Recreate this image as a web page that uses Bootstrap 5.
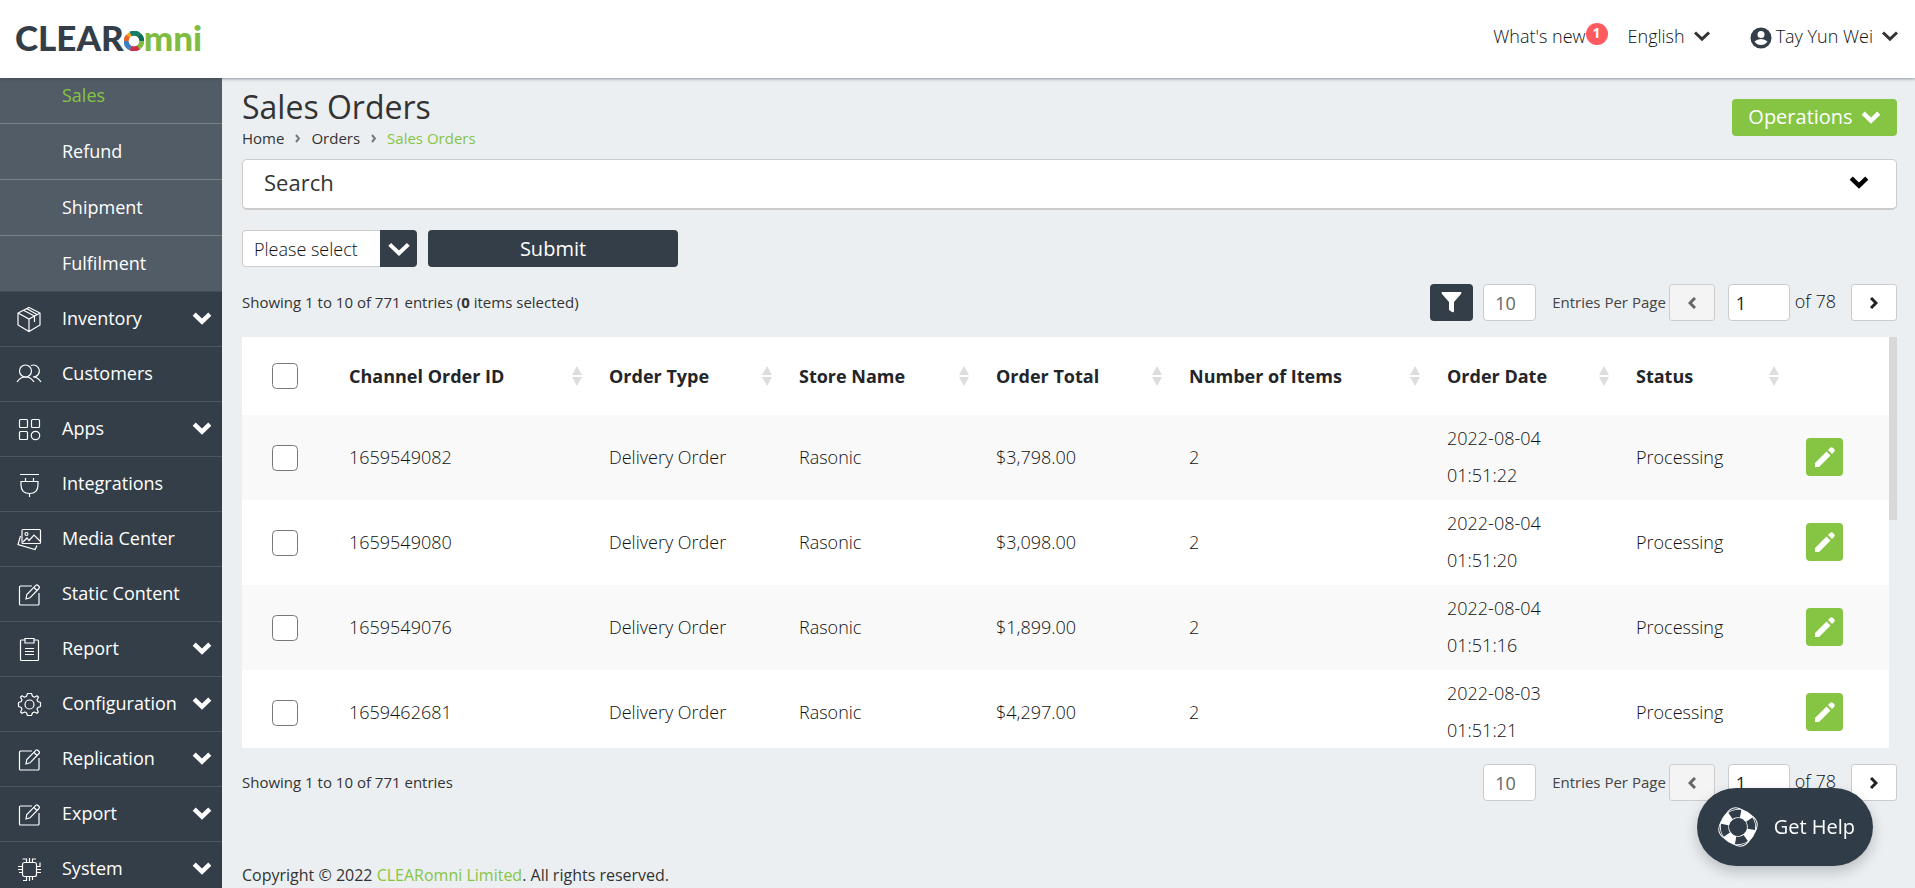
<!DOCTYPE html>
<html lang="en">
<head>
<meta charset="utf-8">
<meta name="viewport" content="width=device-width, initial-scale=1">
<title>Sales Orders - CLEARomni</title>
<link href="https://cdn.jsdelivr.net/npm/bootstrap@5.3.0/dist/css/bootstrap.min.css" rel="stylesheet">
<style>
:root{--dark:#343e48;--green:#86c543;--line:#ccc}
body{font-family:"Open Sans",sans-serif;font-size:18px;font-weight:400;line-height:24px;color:#333;background:#ebeff2}
a{color:inherit;text-decoration:none}
.form-control,.form-select,.btn{font-size:18px;line-height:24px;border-radius:4px}
.topbar{height:78px;background:#fff;z-index:3;box-shadow:0 1px 3px rgba(52,62,72,.5);padding:0 16px 0 15px;flex:none}
.brand{font-family:Lato,sans-serif;font-weight:900;font-size:35px;line-height:40px;color:var(--dark);margin-bottom:5px}
.brand .omni{color:#7fbd42}
.topmenu{font-size:18px;font-weight:300;padding-bottom:6px;color:#111}
.topmenu button{background:none;border:0;padding:0;color:#111;font-weight:300}
.topmenu .chev{color:#333}
.lang{margin-right:39px}
.count{width:22px;height:22px;background:#ff5a5f;font-size:14px;font-weight:700;line-height:20px;color:#fff;margin:0 20px 4px 0}
.body-row{min-height:0}
.side{width:222px;flex:none;background:var(--dark);overflow:hidden;color:#fff}
.side ul{margin:-10px 0 0;padding:0}
.side a{display:flex;align-items:center;height:55px;padding:0 10px 2px 15px;border-bottom:1px solid #4c5560}
.side .sub a{height:56px;padding:0 0 2px 62px;background:#525c66;border-bottom-color:#7b8086}
.side .sub:nth-child(4) a{border-bottom-color:#444e58}
.side .current{color:var(--green)}
.side .pic{width:28px;height:28px;margin:1px 19px 0 0;fill:none;stroke:#fff;stroke-width:1.2;flex:none}
.chev{fill:none;stroke:currentColor;flex:none}
.page{padding:8px 18px 0 20px;overflow:hidden}
h1{font-size:32px;line-height:42px;font-weight:400;margin:0}
.crumbs{font-size:15px;line-height:20px;gap:11px}
.green{color:var(--green)}
.btn-go{background:var(--green);color:#fff;font-size:20px;height:37px;width:165px}
.search{height:51px;background:#fff;border:1px solid var(--line);border-bottom-width:2px;border-radius:5px;font-size:22px;padding:0 27px 4px 21px;margin:11px 0 20px;color:#333}
.pick select{width:138px;height:37px;border:1px solid var(--line);border-right:0;border-radius:4px 0 0 4px;padding:0 0 0 11px;background:#fff;color:#111;font-weight:300}
.pick label{width:37px;height:37px;background:var(--dark);color:#fff;border-radius:0 4px 4px 0}
.btn-submit{background:var(--dark);color:#fff;width:250px;height:37px;font-size:20px;padding:0;margin-left:11px}
.bar{margin:17px 0 16px;font-size:15px}
.bar>span{padding-bottom:2px}
.pager label{margin:0 3px 2px 16px;color:#444}
.filter{width:43px;height:37px;padding:0;background:var(--dark);margin-right:10px}
.filter:hover{background:var(--dark)}
.box{height:37px;border:1px solid var(--line);background:#fff}
.per{width:53px;padding:0 11px;color:#666}
.num{width:62px;padding:0 7px;margin-left:13px;color:#222}
.of{font-size:18px;font-weight:300;color:#111;margin:0 15px 4px 5px}
.nav-btn{display:flex;align-items:center;justify-content:center;width:46px;height:37px;border:1px solid var(--line);border-radius:3px;padding:0;background:#fff;color:#222}
.nav-btn:disabled{background:#f4f4f4;color:#666;border-color:var(--line);opacity:1}
.scroller{height:calc(100vh - 477px);min-height:78px}
.orders{table-layout:fixed;width:100%;background:#fff;color:#111}
.orders th{height:78px;font-weight:700;color:#222529;padding:0 7px 1px 20px}
.orders td{height:85px;padding:0 20px 1px;line-height:37px;font-weight:300}
.orders tbody tr:nth-child(odd){background:#f9f9f9}
.orders .tick{padding:0 0 0 30px}
.orders input{display:block;width:26px;height:26px;margin:0;border:1px solid #777;border-radius:3px}
.edit{width:37px;height:38px;padding:0;background:var(--green)}
.thumb{width:8px;flex:none}
.thumb div{height:183px;background:#d8d8d8}
.foot{font-size:16px;padding-top:46px}
.help{position:fixed;right:42px;bottom:22px;width:176px;height:78px;border:0;border-radius:39px;background:#303d49;color:#fff;font-size:20px;font-weight:500;padding:0 18px 0 20px;box-shadow:0 6px 14px rgba(0,0,0,.2)}
</style>
</head>
<body>
<svg class="d-none">
  <symbol id="down" viewBox="0 0 18 12"><path d="M2 2.500 9 9.200 16 2.500"/></symbol>
  <symbol id="sort" viewBox="0 0 10 20"><path d="M5 0 10 9H0ZM0 11H10L5 20Z" fill="#ddd"/></symbol>
  <symbol id="pencil" viewBox="0 0 20 20"><path fill="#fff" d="M0 16 11.500 4.500 15.500 8.500 4 20H0ZM13 3 15 1Q16.500-.5 18 1L19 2Q20.500 3.500 19 5L17 7Z"/></symbol>
  <symbol id="compose" viewBox="0 0 28 28"><path d="M17 6H5.500Q4.500 6 4.500 7V24Q4.500 25 5.500 25H23Q24 25 24 24V13M11 19 11.800 14.500 21 5.200Q22 4.600 23 5.500L24 6.500Q24.900 7.400 24 8.500L15 17.800ZM19 7.500 22 10.500"/></symbol>
</svg>
<div class="vh-100 d-flex flex-column overflow-hidden">
<header class="topbar d-flex align-items-center justify-content-between">
  <a class="brand d-flex align-items-center" href="#"><span>CLEAR</span><svg class="mt-2" width="20" height="20" viewBox="1 1 18 18" fill="none" stroke-width="4.500"><circle cx="10" cy="10" r="6.700" stroke="#f5a623"/><path d="M7 3.700A7 7 0 0 1 15 5.200" stroke="#12806a"/><path d="M15 5A7 7 0 0 1 17 10" stroke="#0b6b58"/><path d="M17 10A7 7 0 0 1 14 15.700" stroke="#7fbd42"/><path d="M14 15.700A7 7 0 0 1 7 16.300" stroke="#c8324a"/><path d="M7 16.300A7 7 0 0 1 3 9.500" stroke="#3d7fc4"/><path d="M3 10A7 7 0 0 1 4.500 5.700" stroke="#e8632c"/><circle cx="10" cy="10" r="4.800" fill="#fff"/></svg><span class="omni">mni</span></a>
  <nav class="topmenu d-flex align-items-center">
    <a href="#">What's new</a><span class="count rounded-circle text-center">1</span>
    <button type="button" class="lang d-flex align-items-center">English<svg class="chev ms-2" width="18" height="12" stroke-width="3"><use href="#down"/></svg></button>
    <button type="button" class="d-flex align-items-center"><svg class="me-1 mt-1" width="22" height="22" viewBox="0 0 22 22"><circle cx="11" cy="11" r="10.500" fill="#343e48"/><circle cx="11" cy="7.500" r="3.500" fill="#fff"/><path d="M4.500 14.500Q7 12 11 12T17.500 14.500Q15 18 11 18T4.500 14.500Z" fill="#fff"/></svg>Tay Yun Wei<svg class="chev ms-2" width="18" height="12" stroke-width="3"><use href="#down"/></svg></button>
  </nav>
</header>
<div class="body-row d-flex flex-fill">
<nav class="side">
  <ul class="list-unstyled">
    <li class="sub"><a class="current" href="#">Sales</a></li>
    <li class="sub"><a href="#">Refund</a></li>
    <li class="sub"><a href="#">Shipment</a></li>
    <li class="sub"><a href="#">Fulfilment</a></li>
    <li><a href="#"><svg class="pic" viewBox="0 0 28 28"><path d="M14 2.500 25 8V20L14 26.500 3 20V8ZM3 8 14 14 25 8M14 14V26M8.500 5.200 19.500 11V17M12 3.700 22 9.500"/></svg><span>Inventory</span><svg class="chev ms-auto" width="20" height="14" stroke-width="4"><use href="#down"/></svg></a></li>
    <li><a href="#"><svg class="pic" viewBox="0 0 28 28"><circle cx="10.500" cy="11" r="6"/><path d="M2 22Q5 17 10.500 17T19 22M16 5.500A6 6 0 1 1 18 17Q23 17 26 22"/></svg><span>Customers</span></a></li>
    <li><a href="#"><svg class="pic" viewBox="0 0 28 28"><rect x="4.500" y="4.500" width="8" height="8" rx="1"/><rect x="16.500" y="4.500" width="8" height="8" rx="1"/><rect x="4.500" y="16.500" width="8" height="8" rx="1"/><circle cx="20.500" cy="20.500" r="4.200"/></svg><span>Apps</span><svg class="chev ms-auto" width="20" height="14" stroke-width="4"><use href="#down"/></svg></a></li>
    <li><a href="#"><svg class="pic" viewBox="0 0 28 28"><path d="M5 4.500H24M10.500 8V11M18.500 8V11M6 11.500H23V15Q23 23.500 14.500 23.500T6 15ZM14.500 23.500V27"/></svg><span>Integrations</span></a></li>
    <li><a href="#"><svg class="pic" viewBox="0 0 28 28"><rect x="7" y="4.500" width="18.500" height="14" rx="1"/><circle cx="11.500" cy="9" r="1.500"/><path d="M8 17 12 13 14 15.500 19 10 25 16M5.500 11 3 19.500 20 24.500 22 20.500"/></svg><span>Media Center</span></a></li>
    <li><a href="#"><svg class="pic"><use href="#compose"/></svg><span>Static Content</span></a></li>
    <li><a href="#"><svg class="pic" viewBox="0 0 28 28"><path d="M10 5H6Q5.500 5 5.500 6V24.500Q5.500 25.500 6.500 25.500H22.500Q23.500 25.500 23.500 24.500V6Q23.500 5 22.500 5H19M10 3.500H19V8H10ZM10 13.500H19M10 16.500H19M10 19.500H19"/></svg><span>Report</span><svg class="chev ms-auto" width="20" height="14" stroke-width="4"><use href="#down"/></svg></a></li>
    <li><a href="#"><svg class="pic" viewBox="0 0 28 28"><circle cx="14.500" cy="14.500" r="4.500"/><path d="M12.500 3.500H16.500L17.500 6.300 19.500 7.200 22 5.800 23.500 7.200 22 9.800 22.800 11.500 25.500 12.500V16.500L22.800 17.500 22 19.300 23.300 22 22 23.300 19.300 22 17.500 22.800 16.500 25.500H12.500L11.500 22.800 9.700 22 7 23.300 5.500 22 7 19.300 6.200 17.500 3.500 16.500V12.500L6.200 11.500 7 9.800 5.500 7.200 7 5.800 9.700 7.200 11.500 6.300Z" stroke-linejoin="round"/></svg><span>Configuration</span><svg class="chev ms-auto" width="20" height="14" stroke-width="4"><use href="#down"/></svg></a></li>
    <li><a href="#"><svg class="pic"><use href="#compose"/></svg><span>Replication</span><svg class="chev ms-auto" width="20" height="14" stroke-width="4"><use href="#down"/></svg></a></li>
    <li><a href="#"><svg class="pic"><use href="#compose"/></svg><span>Export</span><svg class="chev ms-auto" width="20" height="14" stroke-width="4"><use href="#down"/></svg></a></li>
    <li><a href="#"><svg class="pic" viewBox="0 0 28 28"><rect x="7.500" y="7.500" width="14" height="14" rx="2"/><path d="M11.500 7V4H7.500M14.500 7V3M17.500 7V4H21M11.500 22V25.500H8M14.500 22V26M17.500 22V25M7 11.500H3M7 14.500H3M7 17.500H4M22 11.500H25V7.500M22 14.500H26M22 17.500H26"/></svg><span>System</span><svg class="chev ms-auto" width="20" height="14" stroke-width="4"><use href="#down"/></svg></a></li>
  </ul>
</nav>
<main class="page flex-fill">
  <div class="d-flex justify-content-between align-items-center">
    <div>
      <h1>Sales Orders</h1>
      <div class="crumbs d-flex align-items-center">
        <a href="#">Home</a><svg width="5" height="9" viewBox="0 0 5 9" fill="none" stroke="#777" stroke-width="2"><path d="M1 1 4 4.500 1 8"/></svg>
        <a href="#">Orders</a><svg width="5" height="9" viewBox="0 0 5 9" fill="none" stroke="#777" stroke-width="2"><path d="M1 1 4 4.500 1 8"/></svg>
        <a href="#" class="green">Sales Orders</a>
      </div>
    </div>
    <button type="button" class="btn btn-go d-flex align-items-center justify-content-center p-0">Operations<svg class="chev ms-2" width="20" height="14" stroke-width="4"><use href="#down"/></svg></button>
  </div>
  <button type="button" class="search w-100 d-flex align-items-center justify-content-between">Search<svg class="chev text-black" width="20" height="14" stroke-width="4"><use href="#down"/></svg></button>
  <form class="d-flex pick">
    <select id="action" class="form-select" aria-label="Action"><option>Please select</option></select>
    <label for="action" class="d-flex align-items-center justify-content-center"><svg class="chev" width="24" height="16" stroke-width="3"><use href="#down"/></svg></label>
    <button type="button" class="btn btn-submit">Submit</button>
  </form>
  <div class="bar d-flex align-items-center justify-content-between">
    <span>Showing 1 to 10 of 771 entries (<strong>0</strong> items selected)</span>
    <div class="d-flex align-items-center pager">
      <button type="button" class="btn filter d-flex align-items-center justify-content-center" aria-label="Filter"><svg width="21" height="21" viewBox="0 0 21 21"><path d="M1 0H20Q21 1 20 2L13 10V19Q13 21 11 20L8 18V10L1 2Q0 1 1 0Z" fill="#fff"/></svg></button>
      <input class="form-control box per" id="per1" value="10"><label for="per1">Entries Per Page</label>
      <button class="btn nav-btn" type="button" disabled aria-label="Previous"><svg width="8" height="12" viewBox="0 0 8 12" fill="none" stroke="currentColor" stroke-width="3"><path d="M7 1 2 6 7 11"/></svg></button>
      <input class="form-control box num" value="1" aria-label="Page"><span class="of">of 78</span>
      <button class="btn nav-btn" type="button" aria-label="Next"><svg width="8" height="12" viewBox="0 0 8 12" fill="none" stroke="currentColor" stroke-width="3"><path d="M1 1 6 6 1 11"/></svg></button>
    </div>
  </div>
  <div class="scroller d-flex">
    <div class="flex-fill overflow-hidden">
    <table class="orders">
      <colgroup><col style="width:87px"><col style="width:260px"><col style="width:190px"><col style="width:197px"><col style="width:193px"><col style="width:258px"><col style="width:189px"><col style="width:170px"><col style="width:103px"></colgroup>
      <thead><tr>
        <th class="tick"><input class="form-check-input" type="checkbox" aria-label="Select all"></th>
        <th><div class="d-flex align-items-center justify-content-between">Channel Order ID<svg width="10" height="20"><use href="#sort"/></svg></div></th>
        <th><div class="d-flex align-items-center justify-content-between">Order Type<svg width="10" height="20"><use href="#sort"/></svg></div></th>
        <th><div class="d-flex align-items-center justify-content-between">Store Name<svg width="10" height="20"><use href="#sort"/></svg></div></th>
        <th><div class="d-flex align-items-center justify-content-between">Order Total<svg width="10" height="20"><use href="#sort"/></svg></div></th>
        <th><div class="d-flex align-items-center justify-content-between">Number of Items<svg width="10" height="20"><use href="#sort"/></svg></div></th>
        <th><div class="d-flex align-items-center justify-content-between">Order Date<svg width="10" height="20"><use href="#sort"/></svg></div></th>
        <th><div class="d-flex align-items-center justify-content-between">Status<svg width="10" height="20"><use href="#sort"/></svg></div></th>
        <th></th>
      </tr></thead>
      <tbody>
        <tr><td class="tick"><input class="form-check-input" type="checkbox" aria-label="Select 1659549082"></td><td>1659549082</td><td>Delivery Order</td><td>Rasonic</td><td>$3,798.00</td><td>2</td><td>2022-08-04<br>01:51:22</td><td>Processing</td><td><button type="button" class="btn edit d-flex align-items-center justify-content-center" aria-label="Edit"><svg width="20" height="20"><use href="#pencil"/></svg></button></td></tr>
        <tr><td class="tick"><input class="form-check-input" type="checkbox" aria-label="Select 1659549080"></td><td>1659549080</td><td>Delivery Order</td><td>Rasonic</td><td>$3,098.00</td><td>2</td><td>2022-08-04<br>01:51:20</td><td>Processing</td><td><button type="button" class="btn edit d-flex align-items-center justify-content-center" aria-label="Edit"><svg width="20" height="20"><use href="#pencil"/></svg></button></td></tr>
        <tr><td class="tick"><input class="form-check-input" type="checkbox" aria-label="Select 1659549076"></td><td>1659549076</td><td>Delivery Order</td><td>Rasonic</td><td>$1,899.00</td><td>2</td><td>2022-08-04<br>01:51:16</td><td>Processing</td><td><button type="button" class="btn edit d-flex align-items-center justify-content-center" aria-label="Edit"><svg width="20" height="20"><use href="#pencil"/></svg></button></td></tr>
        <tr><td class="tick"><input class="form-check-input" type="checkbox" aria-label="Select 1659462681"></td><td>1659462681</td><td>Delivery Order</td><td>Rasonic</td><td>$4,297.00</td><td>2</td><td>2022-08-03<br>01:51:21</td><td>Processing</td><td><button type="button" class="btn edit d-flex align-items-center justify-content-center" aria-label="Edit"><svg width="20" height="20"><use href="#pencil"/></svg></button></td></tr>
      </tbody>
    </table>
    </div>
    <div class="thumb"><div></div></div>
  </div>
  <div class="bar mt-3 d-flex align-items-center justify-content-between">
    <span>Showing 1 to 10 of 771 entries</span>
    <div class="d-flex align-items-center pager">
      <input class="form-control box per" id="per2" value="10"><label for="per2">Entries Per Page</label>
      <button class="btn nav-btn" type="button" disabled aria-label="Previous"><svg width="8" height="12" viewBox="0 0 8 12" fill="none" stroke="currentColor" stroke-width="3"><path d="M7 1 2 6 7 11"/></svg></button>
      <input class="form-control box num" value="1" aria-label="Page"><span class="of">of 78</span>
      <button class="btn nav-btn" type="button" aria-label="Next"><svg width="8" height="12" viewBox="0 0 8 12" fill="none" stroke="currentColor" stroke-width="3"><path d="M1 1 6 6 1 11"/></svg></button>
    </div>
  </div>
  <footer class="foot">Copyright © 2022 <a href="#" class="green">CLEARomni Limited</a>. All rights reserved.</footer>
</main>
</div>
</div>
<button type="button" class="help d-flex align-items-center justify-content-between">
  <svg width="42" height="42" viewBox="0 0 42 42" fill="none" stroke="#fff"><g transform="rotate(-13 21 21)"><circle cx="21" cy="21" r="13.500" stroke-width="9"/><circle cx="21" cy="21" r="13.500" stroke="#303d49" stroke-width="7.500" stroke-dasharray="10.600 10.600" stroke-dashoffset="5.300"/><path d="M12 6Q21-3 30 6M12 36Q21 45 30 36M6 12Q-3 21 6 30M36 12Q45 21 36 30"/></g></svg>
  <span>Get Help</span>
</button>
<script src="https://cdn.jsdelivr.net/npm/bootstrap@5.3.0/dist/js/bootstrap.bundle.min.js"></script>
</body>
</html>
